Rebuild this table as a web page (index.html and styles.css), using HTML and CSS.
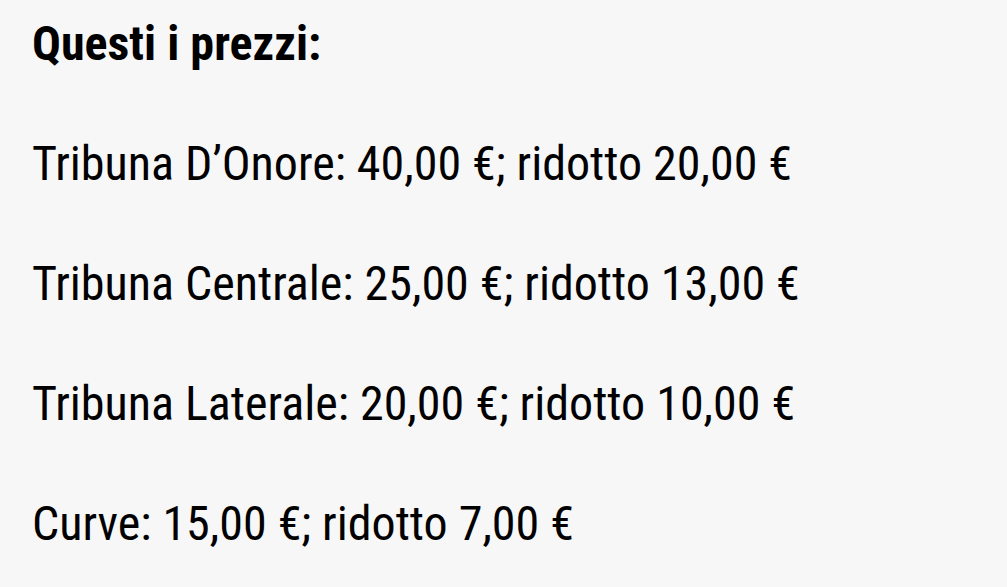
FILE: index.html
```html
<!DOCTYPE html>
<html lang="it">
<head>
<meta charset="utf-8">
<link rel="stylesheet" href="styles.css">
</head>
<body>
<div class="content">
  <p class="title">Questi i prezzi:</p>
  <p>Tribuna D’Onore: 40,00 €; ridotto 20,00 €</p>
  <p>Tribuna Centrale: 25,00 €; ridotto 13,00 €</p>
  <p>Tribuna Laterale: 20,00 €; ridotto 10,00 €</p>
  <p>Curve: 15,00 €; ridotto 7,00 €</p>
</div>
</body>
</html>
```
FILE: styles.css
```css
html, body {
  margin: 0;
  padding: 0;
  background: #f7f7f7;
}
.content {
  padding: 8px 32px 0;
  font-family: "Roboto Condensed", Roboto, sans-serif;
  font-stretch: condensed;
  font-size: 48px;
  line-height: 72px;
  color: #000;
}
.content p {
  margin: 0 0 48px;
}
.content .title {
  font-weight: 700;
}
```
